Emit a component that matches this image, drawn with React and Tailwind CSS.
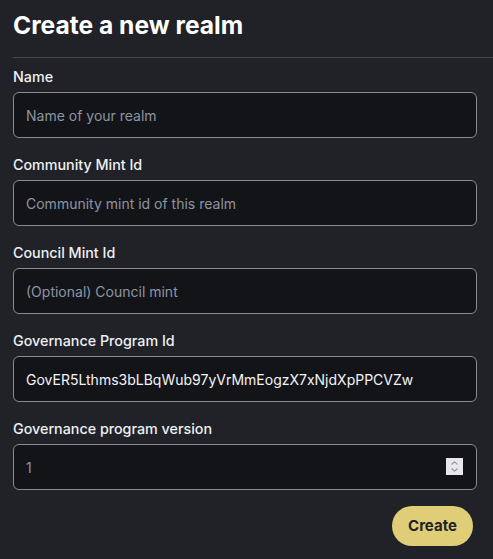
import React from "react";

function Field({ label, placeholder, value, number }) {
  return (
    <div className="mb-[17px]">
      <div className="text-[14.3px] leading-5 font-medium text-[#eef0f3] mb-[5px]">{label}</div>
      <div className="relative">
        <input
          readOnly
          className={`w-full h-[46px] rounded-md border border-[#878b92] bg-[#131418] px-3 text-sm outline-none placeholder:text-[#8c95a2] ${number ? "text-[#8c95a2]" : "text-[#f3f4f6]"}`}
          style={{ fontFamily: "Inter, sans-serif" }}
          placeholder={placeholder}
          value={value ?? ""}
        />
        {number && (
          <div className="absolute right-[14px] top-[14px] w-[17px] h-[17px] bg-[#e8e8ec] flex items-center justify-center">
            <svg width="9" height="13" viewBox="0 0 9 13" fill="none" stroke="#9a9aa3" strokeWidth="1.3">
              <path d="M1.5 4.5 L4.5 1.8 L7.5 4.5" />
              <path d="M1.5 8.5 L4.5 11.2 L7.5 8.5" />
            </svg>
          </div>
        )}
      </div>
    </div>
  );
}

export default function App() {
  return (
    <div className="w-[493px] h-[559px] bg-[#202227] pl-[13px] pt-[9px] overflow-hidden" style={{ fontFamily: "Inter, sans-serif" }}>
      <h1 className="text-[24.6px] leading-8 font-bold text-white">Create a new realm</h1>
      <div className="h-px bg-[#44474e] mt-4 mb-[9px]" />
      <div className="pr-4">
        <Field label="Name" placeholder="Name of your realm" />
        <Field label="Community Mint Id" placeholder="Community mint id of this realm" />
        <Field label="Council Mint Id" placeholder="(Optional) Council mint" />
        <Field label="Governance Program Id" value="GovER5Lthms3bLBqWub97yVrMmEogzX7xNjdXpPPCVZw" />
        <Field label="Governance program version" value="1" number />
        <div className="flex justify-end pr-[4px] -mt-[1px]">
          <button className="h-10 w-[81px] rounded-full bg-[#e0cd78] text-[15px] font-bold text-[#1f2328]">Create</button>
        </div>
      </div>
    </div>
  );
}
